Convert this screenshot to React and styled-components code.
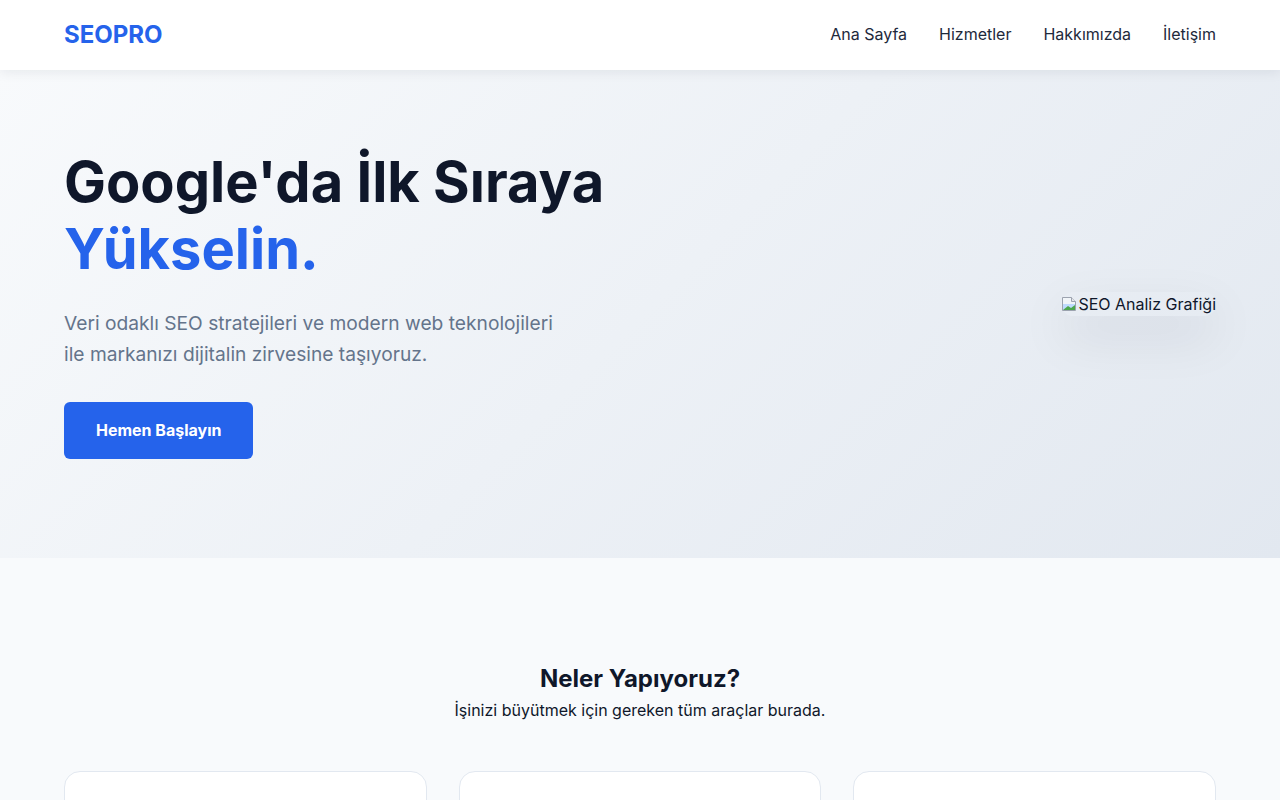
import React from "react";
import styled, { createGlobalStyle } from "styled-components";

const GlobalStyle = createGlobalStyle`
  * { box-sizing: border-box; }
  body {
    margin: 0;
    font-family: Inter, "Noto Sans", Arial, sans-serif;
    background: #f8fafc;
    color: #0f172a;
  }
`;

const services = [
  { title: "Teknik SEO", text: "Site hızı, taranabilirlik ve yapısal veri ile sağlam bir temel kuruyoruz." },
  { title: "İçerik Stratejisi", text: "Anahtar kelime araştırmasıyla hedef kitlenize ulaşan içerikler üretiyoruz." },
  { title: "Bağlantı Kurma", text: "Otoriter sitelerden kaliteli bağlantılarla alan adınızı güçlendiriyoruz." },
];

const App = () => {
  return (
    <>
      <GlobalStyle />
      <Header>
        <Logo>SEOPRO</Logo>
        <Nav>
          <a href="#">Ana Sayfa</a>
          <a href="#">Hizmetler</a>
          <a href="#">Hakkımızda</a>
          <a href="#">İletişim</a>
        </Nav>
      </Header>

      <Hero>
        <HeroText>
          <Title>
            Google'da İlk Sıraya <br />
            <Accent>Yükselin.</Accent>
          </Title>
          <Lead>
            Veri odaklı SEO stratejileri ve modern web teknolojileri ile markanızı dijitalin zirvesine taşıyoruz.
          </Lead>
          <CtaButton>Hemen Başlayın</CtaButton>
        </HeroText>
        <Figure>
          <BrokenIcon />
          <span>SEO Analiz Grafiği</span>
        </Figure>
      </Hero>

      <Services>
        <SectionTitle>Neler Yapıyoruz?</SectionTitle>
        <SectionSub>İşinizi büyütmek için gereken tüm araçlar burada.</SectionSub>
        <CardGrid>
          {services.map((s, i) => (
            <Card key={i}>
              <CardIcon>{i + 1}</CardIcon>
              <h3>{s.title}</h3>
              <p>{s.text}</p>
            </Card>
          ))}
        </CardGrid>
      </Services>
    </>
  );
};

export default App;

// small "image failed to load" glyph shown next to the alt text
const BrokenIcon = () => (
  <svg width="16" height="16" viewBox="0 0 16 16">
    <path d="M1.5 1.5h9l4 4v9h-13z" fill="#f1f5f9" stroke="#9ca3af" />
    <path d="M10.5 1.5v4h4" fill="#e5e7eb" stroke="#9ca3af" />
    <rect x="2" y="8" width="12" height="6" fill="#bfdbfe" />
    <path d="M2 14l5-4 3 2 4-3v5z" fill="#4ca84c" />
  </svg>
);

const Header = styled.header`
  height: 70px;
  background: #fff;
  display: flex;
  align-items: center;
  justify-content: space-between;
  padding: 0 64px 2px;
  box-shadow: 0 2px 12px rgba(15, 23, 42, 0.08);
  position: relative;
  z-index: 2;
`;

const Logo = styled.div`
  font-size: 24px;
  font-weight: 700;
  color: #2563eb;
`;

const Nav = styled.nav`
  display: flex;
  gap: 32px;
  a {
    color: #1e293b;
    text-decoration: none;
    font-size: 16px;
    font-weight: 400;
  }
`;

const Hero = styled.section`
  background: linear-gradient(135deg, #f8fafc 0%, #e2e8f0 100%);
  height: 488px;
  padding: 79px 64px 99px;
  display: flex;
  align-items: center;
  justify-content: space-between;
`;

const HeroText = styled.div`
  display: flex;
  flex-direction: column;
  align-items: flex-start;
`;

const Title = styled.h1`
  margin: 0 0 25px;
  font-size: 56px;
  line-height: 1.2;
  font-weight: 700;
  color: #0f172a;
`;

const Accent = styled.span`
  color: #2563eb;
`;

const Lead = styled.p`
  margin: 0 0 33px;
  max-width: 500px;
  font-size: 19.2px;
  line-height: 1.6;
  color: #64748b;
`;

const CtaButton = styled.button`
  background: #2563eb;
  color: #fff;
  border: none;
  border-radius: 6px;
  padding: 18px 32px 19px;
  font-family: inherit;
  font-size: 16px;
  font-weight: 700;
  cursor: pointer;
`;

const Figure = styled.div`
  display: inline-flex;
  align-items: center;
  gap: 1px;
  font-size: 16px;
  color: #0f172a;
  border-radius: 20px;
  box-shadow: 0 20px 50px rgba(15, 23, 42, 0.1);
  line-height: 24px;
  margin-bottom: 1px;
`;

const Services = styled.section`
  padding: 107px 64px 80px;
  text-align: center;
`;

const SectionTitle = styled.h2`
  margin: 0 0 4px;
  font-size: 24px;
  line-height: 1.2;
  font-weight: 700;
`;

const SectionSub = styled.p`
  margin: 0 0 49px;
  font-size: 16px;
  line-height: 1.5;
`;

const CardGrid = styled.div`
  display: grid;
  grid-template-columns: repeat(3, 1fr);
  gap: 32px;
`;

const Card = styled.div`
  background: #fff;
  border: 1px solid #e2e8f0;
  border-radius: 16px;
  padding: 40px 32px;
  text-align: left;
  h3 {
    margin: 20px 0 10px;
    font-size: 20px;
  }
  p {
    margin: 0;
    color: #64748b;
    line-height: 1.6;
  }
`;

const CardIcon = styled.div`
  width: 48px;
  height: 48px;
  border-radius: 12px;
  background: #dbeafe;
  color: #2563eb;
  font-weight: 700;
  display: flex;
  align-items: center;
  justify-content: center;
`;
